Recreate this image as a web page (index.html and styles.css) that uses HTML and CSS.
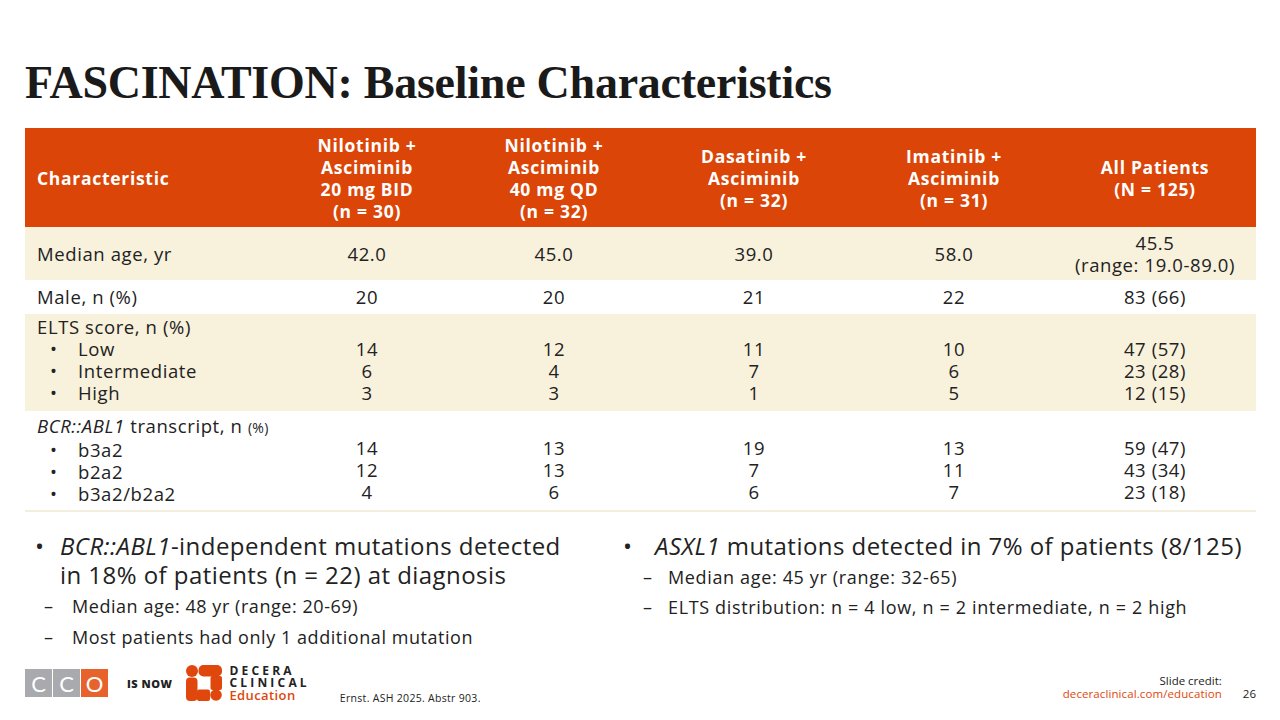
FILE: index.html
```html
<!DOCTYPE html>
<html>
<head>
<meta charset="utf-8">
<link rel="stylesheet" href="styles.css">
</head>
<body>
<div class="slide">
  <h1 class="title">FASCINATION: Baseline Characteristics</h1>
  <table class="data">
    <colgroup>
      <col class="c1"><col class="c2"><col class="c3"><col class="c4"><col class="c5"><col class="c6">
    </colgroup>
    <thead>
      <tr>
        <th class="left">Characteristic</th>
        <th>Nilotinib +<br>Asciminib<br>20 mg BID<br>(n = 30)</th>
        <th>Nilotinib +<br>Asciminib<br>40 mg QD<br>(n = 32)</th>
        <th>Dasatinib +<br>Asciminib<br>(n = 32)</th>
        <th>Imatinib +<br>Asciminib<br>(n = 31)</th>
        <th>All Patients<br>(N = 125)</th>
      </tr>
    </thead>
    <tbody>
      <tr class="cream r-age">
        <td class="left">Median age, yr</td>
        <td>42.0</td><td>45.0</td><td>39.0</td><td>58.0</td>
        <td>45.5<br>(range: 19.0-89.0)</td>
      </tr>
      <tr class="white r-male">
        <td class="left">Male, n (%)</td>
        <td>20</td><td>20</td><td>21</td><td>22</td><td>83 (66)</td>
      </tr>
      <tr class="cream r-block">
        <td class="left">ELTS score, n (%)
          <ul class="tb"><li>Low</li><li>Intermediate</li><li>High</li></ul>
        </td>
        <td class="stack"><br>14<br>6<br>3</td>
        <td class="stack"><br>12<br>4<br>3</td>
        <td class="stack"><br>11<br>7<br>1</td>
        <td class="stack"><br>10<br>6<br>5</td>
        <td class="stack"><br>47 (57)<br>23 (28)<br>12 (15)</td>
      </tr>
      <tr class="white r-block last">
        <td class="left"><i>BCR::ABL1</i> transcript, n <span class="small">(%)</span>
          <ul class="tb"><li>b3a2</li><li>b2a2</li><li>b3a2/b2a2</li></ul>
        </td>
        <td class="stack"><br>14<br>12<br>4</td>
        <td class="stack"><br>13<br>13<br>6</td>
        <td class="stack"><br>19<br>7<br>6</td>
        <td class="stack"><br>13<br>11<br>7</td>
        <td class="stack"><br>59 (47)<br>43 (34)<br>23 (18)</td>
      </tr>
    </tbody>
  </table>

  <div class="notes">
    <div class="col col-left">
      <ul class="main">
        <li><i>BCR::ABL1</i>-independent mutations detected in 18% of patients (n = 22) at diagnosis
          <ul class="sub">
            <li>Median age: 48 yr (range: 20-69)</li>
            <li>Most patients had only 1 additional mutation</li>
          </ul>
        </li>
      </ul>
    </div>
    <div class="col col-right">
      <ul class="main">
        <li><i>ASXL1</i> mutations detected in 7% of patients (8/125)
          <ul class="sub sub-r">
            <li>Median age: 45 yr (range: 32-65)</li>
            <li>ELTS distribution: n = 4 low, n = 2 intermediate, n = 2 high</li>
          </ul>
        </li>
      </ul>
    </div>
  </div>

  <div class="footer">
    <div class="cco">
      <span class="sq gray">C</span><span class="sq gray">C</span><span class="sq orange">O</span>
    </div>
    <span class="isnow">IS NOW</span>
    <svg class="decera-icon" width="36" height="36" viewBox="0 0 36 36" aria-hidden="true">
      <g fill="#E0470C">
        <circle cx="6" cy="6" r="6"/>
        <rect x="12.5" y="0" width="23.5" height="11.5" rx="5"/>
        <rect x="24.5" y="11" width="11.5" height="14" rx="2"/>
        <rect x="0" y="12.5" width="11.5" height="23.5" rx="4"/>
        <rect x="11" y="24.5" width="13" height="11.5" rx="2"/>
        <circle cx="30" cy="30" r="5.8"/>
      </g>
    </svg>
    <div class="decera-text">
      <div class="dk">DECERA</div>
      <div class="dk">CLINICAL</div>
      <div class="ed">Education</div>
    </div>
    <span class="ref">Ernst. ASH 2025. Abstr 903.</span>
    <div class="credit">
      <div>Slide credit:</div>
      <div class="link">deceraclinical.com/education</div>
    </div>
    <span class="pagenum">26</span>
  </div>
</div>
</body>
</html>
```

FILE: styles.css
```css
* { box-sizing: border-box; }
html, body { margin: 0; padding: 0; background: #fff; }
body { font-family: "Open Sans", "DejaVu Sans", sans-serif; color: #1f1f1f; }

.slide {
  width: 1280px;
  height: 720px;
  padding: 0 24px 0 25px;
  display: flex;
  flex-direction: column;
  overflow: hidden;
}

.title {
  margin: 60px 0 0 0;
  font-family: "Liberation Serif", "Times New Roman", serif;
  font-weight: 700;
  font-size: 46px;
  line-height: 46px;
  color: #1a1a1a;
  letter-spacing: -0.25px;
}

.data {
  margin-top: 22px;
  width: 1231px;
  border-collapse: collapse;
  table-layout: fixed;
  font-size: 18.5px;
  line-height: 22px;
  letter-spacing: 0.6px;
}
.c1 { width: 255px; }
.c2 { width: 174px; }
.c3 { width: 200px; }
.c4 { width: 200px; }
.c5 { width: 200px; }
.c6 { width: 202px; }

.data th {
  background: #DC4508;
  color: #fff;
  font-weight: 700;
  font-size: 17.5px;
  line-height: 22px;
  letter-spacing: 0.7px;
  text-align: center;
  vertical-align: middle;
  height: 99px;
  padding: 0 4px;
}
.data th.left { text-align: left; padding-left: 12px; }

.data td {
  text-align: center;
  vertical-align: middle;
  padding: 0 4px;
  border-top: 2px solid #fff;
  color: #222;
}
.data td.left { text-align: left; padding-left: 12px; }
.data td.stack { vertical-align: top; }

.cream td { background: #F8F1DC; }
.white td { background: #fff; }

.r-age td { height: 54px; border-top: 0; }
.r-male td { height: 32px; }
.r-block td { height: 99px; padding-top: 2px; vertical-align: top; }
.last td { border-bottom: 2px solid #F4EEDF; }

.tb {
  margin: 0;
  padding: 0;
  list-style: none;
}
.tb li { position: relative; padding-left: 41px; }
.tb li::before {
  content: "\2022";
  position: absolute;
  left: 13px;
  top: 0;
}
.small { font-size: 14px; letter-spacing: 0.3px; }

.notes {
  display: grid;
  grid-template-columns: 557px 1fr;
  column-gap: 33px;
  margin-top: 19px;
}
.main {
  list-style: none;
  margin: 0;
  padding: 0;
}
.main > li {
  position: relative;
  font-size: 24px;
  line-height: 29px;
  letter-spacing: 0.45px;
  padding-left: 35px;
  color: #222;
}
.main > li::before {
  content: "\2022";
  position: absolute;
  left: 10px;
  top: 0;
}
.col-right .main > li { padding-left: 40px; }
.col-right .main > li::before { left: 8px; }

.sub {
  list-style: none;
  margin: 5px 0 0 -13px;
  padding: 0;
}
.sub li {
  position: relative;
  font-size: 18px;
  line-height: 24px;
  letter-spacing: 0.55px;
  padding-left: 25px;
  margin-bottom: 7px;
}
.sub li::before {
  content: "\2013";
  position: absolute;
  left: -3px;
  top: 0;
}
.sub-r { margin-left: -16px; }
.sub-r li { margin-bottom: 6px; padding-left: 29px; letter-spacing: 0.65px; }
.sub-r li::before { left: 4px; }

.footer {
  margin-top: auto;
  height: 60px;
  padding-bottom: 14px;
  display: flex;
  align-items: center;
}
.cco { display: flex; gap: 1px; }
.sq {
  width: 27px;
  height: 28px;
  display: flex;
  align-items: center;
  justify-content: center;
  color: #fff;
  font-family: "Lato", "Open Sans", sans-serif;
  font-size: 22px;
  font-weight: 400;
}
.sq.gray { background: #A8AAAD; }
.sq.orange { background: #E8622C; }
.isnow {
  margin-left: 19px;
  font-size: 11px;
  font-weight: 800;
  color: #222;
  letter-spacing: 0.5px;
}
.decera-icon { margin-left: 14px; flex: none; }
.decera-text { margin-left: 7px; line-height: 12px; margin-top: -1px; }
.decera-text .dk {
  font-size: 12px;
  font-weight: 700;
  letter-spacing: 3.2px;
  color: #222;
}
.decera-text .ed {
  font-size: 13px;
  font-weight: 600;
  letter-spacing: 0.4px;
  color: #E0470C;
}
.ref {
  align-self: flex-end;
  margin-left: 30px;
  margin-bottom: 1px;
  font-size: 10.5px;
  letter-spacing: 0.3px;
  color: #222;
}
.credit {
  margin-left: auto;
  text-align: right;
  font-size: 11.5px;
  line-height: 13px;
  color: #222;
  margin-top: 8px;
}
.credit .first { letter-spacing: 0; }
.credit .link { color: #E0470C; letter-spacing: 0.1px; }
.pagenum {
  margin-left: 21px;
  margin-top: 20px;
  font-size: 11.5px;
  color: #222;
}
```
